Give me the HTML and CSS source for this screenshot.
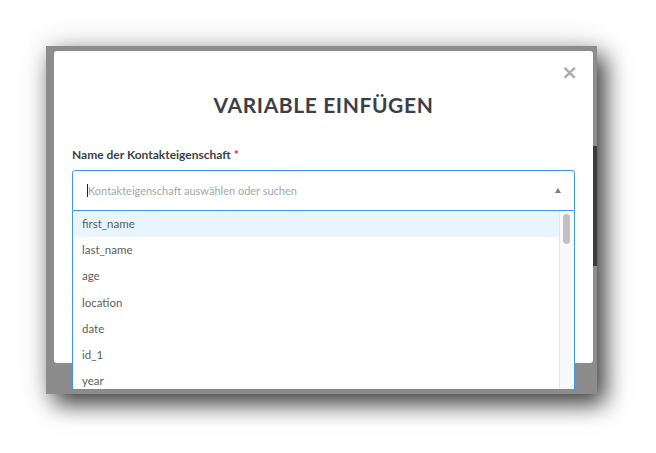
FILE: index.html
```html
<!DOCTYPE html>
<html lang="de">

<head>
  <meta charset="UTF-8">
  <meta name="viewport" content="width=device-width, initial-scale=1.0">
  <title>Variable einfügen</title>
  <link rel="stylesheet" href="styles.css">
</head>

<body>
  <div class="frame">
    <div class="page-edge"></div>
    <div class="modal">
      <span class="close">&times;</span>
      <h1 class="title">VARIABLE EINFÜGEN</h1>
      <label class="label">Name der Kontakteigenschaft <span class="req">*</span></label>
      <div class="select">
        <div class="select-input">
          <span class="caret"></span>
          <span class="placeholder">Kontakteigenschaft auswählen oder suchen</span>
          <span class="arrow"></span>
        </div>
        <div class="menu">
          <ul class="options">
            <li class="active">first_name</li>
            <li>last_name</li>
            <li>age</li>
            <li>location</li>
            <li>date</li>
            <li>id_1</li>
            <li>year</li>
          </ul>
          <div class="scrollbar">
            <div class="thumb"></div>
          </div>
        </div>
      </div>
    </div>
  </div>
</body>

</html>
```

FILE: styles.css
```css
html {
  background-color: #fff;
}

body {
  margin: 0;
  padding: 46px 0 60px 46px;
  min-height: 453px;
  box-sizing: border-box;
  font-family: 'Lato', 'Liberation Sans', sans-serif;
  color: #3d3f47;
}

.frame {
  position: relative;
  width: 551px;
  height: 348px;
  background-color: #8c8c8c;
  box-shadow: 8px 10px 22px rgba(0, 0, 0, 0.75), 0 0 30px rgba(0, 0, 0, 0.12);
  padding: 5px 0 0 8px;
  box-sizing: border-box;
}

/* bit of the page behind the overlay */
.page-edge {
  position: absolute;
  right: 0;
  top: 100px;
  width: 4px;
  height: 120px;
  background-color: #3b3b3d;
}

.modal {
  position: relative;
  width: 539px;
  height: 312px;
  background-color: #fff;
  border-radius: 3px;
  padding: 0 18px;
  box-sizing: border-box;
}

.close {
  position: absolute;
  top: 10px;
  right: 15px;
  font-family: 'DejaVu Sans', sans-serif;
  font-size: 20px;
  font-weight: bold;
  line-height: 22px;
  color: #a9abae;
}

.title {
  margin: 0;
  padding-top: 40px;
  text-align: center;
  font-size: 21px;
  font-weight: 700;
  letter-spacing: 0.6px;
  line-height: 28px;
}

.label {
  display: block;
  margin-top: 28px;
  font-size: 12px;
  font-weight: 700;
  line-height: 16px;
}

.req {
  color: #e0262b;
}

.select {
  position: relative;
  margin-top: 7px;
}

.select-input {
  display: flex;
  align-items: center;
  height: 41px;
  border: 1px solid #3a9ae6;
  border-radius: 3px 3px 0 0;
  padding: 0 14px;
  box-sizing: border-box;
  background-color: #fff;
}

.caret {
  width: 1px;
  height: 13px;
  background-color: #222;
}

.placeholder {
  flex: 1;
  font-size: 11px;
  color: #a5a7ab;
}

.arrow {
  width: 0;
  height: 0;
  border-left: 3px solid transparent;
  border-right: 3px solid transparent;
  border-bottom: 5px solid #7a7c80;
  margin-right: -1px;
}

.menu {
  position: absolute;
  top: 41px;
  left: 0;
  right: 0;
  height: 179px;
  display: flex;
  background-color: #fff;
  border: 1px solid #3a9ae6;
  border-top: none;
  box-sizing: border-box;
  overflow: hidden;
}

.options {
  flex: 1;
  margin: 0;
  padding: 0;
  list-style-type: none;
}

.options li {
  height: 26.2px;
  line-height: 26px;
  padding-left: 9px;
  font-size: 11.5px;
  color: #5b5d61;
}

.options li.active {
  background-color: #eaf4fd;
}

.scrollbar {
  width: 14px;
  background-color: #f9f9f9;
  border-left: 1px solid #e6e6e6;
}

.thumb {
  width: 7px;
  height: 30px;
  margin: 3px 0 0 3px;
  border-radius: 4px;
  background-color: #c1c1c1;
}
```
